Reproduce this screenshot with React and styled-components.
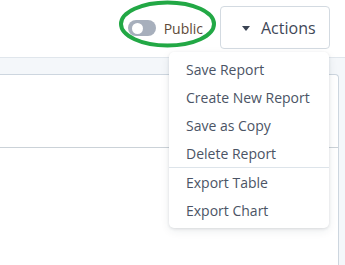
import styled, { createGlobalStyle } from "styled-components";

const GlobalStyle = createGlobalStyle`
  html, body {
    margin: 0;
    padding: 0;
    background: #ffffff;
    font-family: "Open Sans", "Liberation Sans", sans-serif;
  }
  #root {
    width: 345px;
    height: 265px;
    overflow: hidden;
  }
`;

const menuItems = [
  ["Save Report", "Create New Report", "Save as Copy", "Delete Report"],
  ["Export Table", "Export Chart"],
];

const App = () => {
  return (
    <>
      <GlobalStyle />
      <Page>
        <TopBar>
          <PublicToggle>
            <Switch>
              <Knob />
            </Switch>
            <ToggleLabel>Public</ToggleLabel>
            <Highlight viewBox="0 0 100 48" aria-hidden="true">
              <ellipse
                cx="48.5"
                cy="24"
                rx="46.5"
                ry="21.5"
                fill="none"
                stroke="#22a845"
                strokeWidth="4"
              />
            </Highlight>
          </PublicToggle>
          <ActionsWrap>
            <ActionsButton>
              <Caret />
              Actions
            </ActionsButton>
            <Menu>
              {menuItems.map((group, i) => (
                <MenuGroup key={i}>
                  {group.map((label) => (
                    <MenuItem key={label}>{label}</MenuItem>
                  ))}
                </MenuGroup>
              ))}
            </Menu>
          </ActionsWrap>
        </TopBar>
        <Workspace>
          <Card>
            <CardRow />
          </Card>
        </Workspace>
      </Page>
    </>
  );
};

export default App;

const Page = styled.div`
  display: flex;
  flex-direction: column;
  height: 265px;
`;

const TopBar = styled.div`
  height: 57px;
  display: flex;
  align-items: center;
  justify-content: flex-end;
  gap: 17px;
  padding-right: 15px;
  flex-shrink: 0;
`;

const PublicToggle = styled.div`
  position: relative;
  display: flex;
  align-items: center;
  gap: 8px;
  margin-top: -1px;
`;

const Switch = styled.div`
  width: 28px;
  height: 16px;
  border-radius: 8px;
  background: #a7afbc;
  display: flex;
  align-items: center;
  padding: 0 3px;
  box-sizing: border-box;
`;

const Knob = styled.div`
  width: 11px;
  height: 11px;
  border-radius: 50%;
  background: #ffffff;
  margin-left: 1px;
`;

const ToggleLabel = styled.span`
  font-size: 14px;
  color: #5e4a38;
`;

const Highlight = styled.svg`
  position: absolute;
  left: -9px;
  top: -19px;
  width: 100px;
  height: 48px;
  pointer-events: none;
`;

const ActionsWrap = styled.div`
  position: relative;
  margin-top: -2px;
`;

const ActionsButton = styled.button`
  display: flex;
  align-items: center;
  gap: 11px;
  height: 43px;
  width: 110px;
  padding: 0 14px 0 21px;
  box-sizing: border-box;
  background: #ffffff;
  border: 1px solid #d3dae1;
  border-radius: 4px;
  font-family: inherit;
  font-size: 16px;
  color: #3f4858;
  cursor: pointer;
`;

const Caret = styled.span`
  width: 0;
  height: 0;
  border-left: 4px solid transparent;
  border-right: 4px solid transparent;
  border-top: 5px solid #3a4353;
  margin-top: 2px;
`;

const Menu = styled.div`
  position: absolute;
  top: 46px;
  right: 1px;
  width: 160px;
  box-sizing: border-box;
  background: #ffffff;
  border-radius: 5px;
  box-shadow: 0 1px 3px rgba(30, 45, 60, 0.12), 0 3px 10px rgba(30, 45, 60, 0.08);
  padding: 3px 0 4px;
  z-index: 2;
`;

const MenuGroup = styled.div`
  & + & {
    border-top: 1px solid #dde4ea;
  }
`;

const MenuItem = styled.div`
  height: 28px;
  display: flex;
  align-items: center;
  padding-left: 17px;
  font-size: 14px;
  color: #4b5465;
  white-space: nowrap;
`;

const Workspace = styled.div`
  flex: 1;
  display: flex;
  flex-direction: column;
  background: #f4f7fa;
  border-top: 1px solid #e0e6ec;
  padding: 16px 6px 0 0;
`;

const Card = styled.div`
  flex: 1;
  background: #ffffff;
  border: 1px solid #cdd6df;
  border-left: none;
  border-bottom: none;
  border-radius: 0 4px 0 0;
`;

const CardRow = styled.div`
  height: 72px;
  border-bottom: 1px solid #cbd2d8;
`;
